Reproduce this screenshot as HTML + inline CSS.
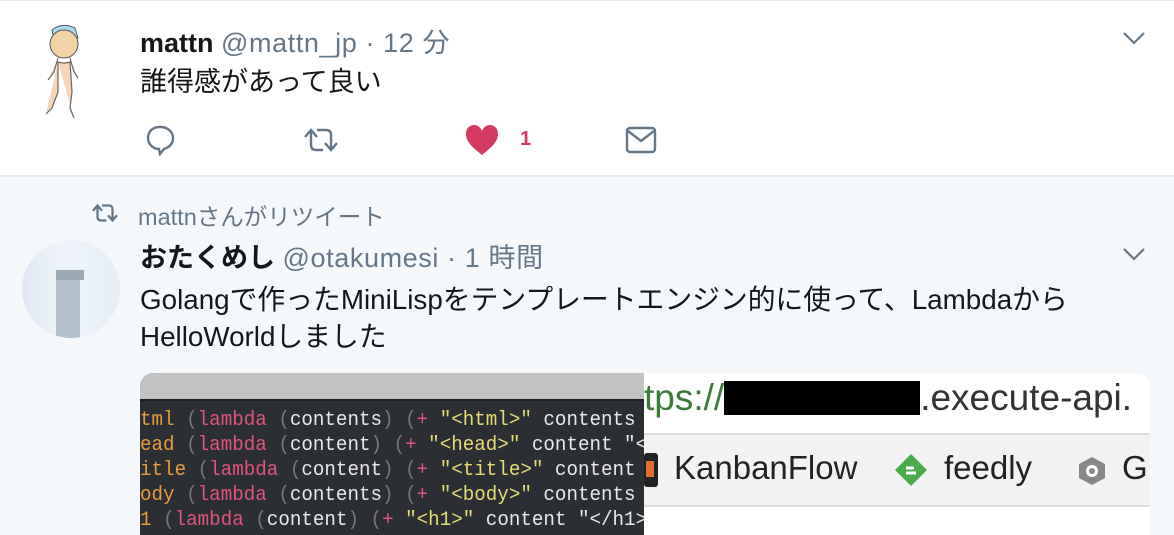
<!DOCTYPE html>
<html><head><meta charset="utf-8"><style>
*{margin:0;padding:0;box-sizing:border-box}
body{width:1174px;height:535px;overflow:hidden;background:#f5f8fa;font-family:"Liberation Sans","Noto Sans CJK JP",sans-serif;position:relative;color:#14171a}
.abs{position:absolute;white-space:nowrap}
.t1{background:#fff;position:absolute;left:0;top:0;width:1174px;height:177px;border-top:1px solid #e6ecf0;border-bottom:2px solid #e6ecf0}
.g{color:#657786}
.code{font-family:"Liberation Mono",monospace;font-size:20px;color:#e8e8e8;line-height:25px;transform:scaleX(0.96);transform-origin:left}
.p{color:#e0537b}.o{color:#e89a3c}.s{color:#e6db74}.d{color:#777}
</style></head><body>
<div class="t1"></div>
<svg class="abs" style="left:40px;top:22px" width="50" height="100" viewBox="0 0 50 100">
<path d="M12 8 Q22 0 35 6 L38 16 L14 18 Z" fill="#a8dcec" stroke="#556" stroke-width="1"/>
<ellipse cx="24" cy="22" rx="14" ry="14" fill="#f2d3a4" stroke="#555" stroke-width="1"/>
<path d="M18 36 L14 50 L8 58 M30 36 L34 50 L38 56 M18 40 Q24 42 30 40 L32 70 L30 86 L34 96 M18 40 L18 70 L12 86 L6 92" fill="#f6d6b8" stroke="#666" stroke-width="1.2"/>
</svg>
<div class="abs" style="left:140px;top:21px;font-size:27px"><b>mattn</b> <span class="g" style="letter-spacing:0.6px">@mattn_jp · 12 分</span></div>
<div class="abs" style="left:140px;top:60px;font-size:27px">誰得感があって良い</div>
<svg class="abs" style="left:1122px;top:30px" width="24" height="16" viewBox="0 0 24 16"><path d="M2 3 L12 13 L22 3" fill="none" stroke="#657786" stroke-width="2.2"/></svg>
<svg class="abs" style="left:145px;top:124px" width="32" height="32" viewBox="0 0 32 32"><path d="M15 3 C7 3 3 8 3 14 C3 20 8 25 14 25 L15 30 L19 25 C25 23 28 19 28 14 C28 8 23 3 15 3 Z" fill="none" stroke="#657786" stroke-width="2.4"/></svg>
<svg class="abs" style="left:303px;top:124px" width="36" height="32" viewBox="0 0 36 32"><path d="M8 7 V21 Q8 26 13 26 H20 M2 13 L8 6 L14 13 M14 6 H23 Q28 6 28 11 V25 M22 19 L28 26 L34 19" fill="none" stroke="#657786" stroke-width="2.4"/></svg>
<svg class="abs" style="left:465px;top:124px" width="34" height="32" viewBox="0 0 34 32"><path d="M17 31 C10 25 1 19 1 10 C1 4 5 1 9 1 C13 1 16 4 17 7 C18 4 21 1 25 1 C29 1 33 4 33 10 C33 19 24 25 17 31 Z" fill="#d23a62"/></svg>
<div class="abs" style="left:520px;top:128px;font-size:20px;font-weight:bold;color:#d23a62">1</div>
<svg class="abs" style="left:625px;top:126px" width="32" height="28" viewBox="0 0 32 28"><rect x="2" y="2" width="28" height="24" rx="3" fill="none" stroke="#657786" stroke-width="2.4"/><path d="M3 5 L16 15 L29 5" fill="none" stroke="#657786" stroke-width="2.4"/></svg>
<svg class="abs" style="left:90px;top:201px" width="30" height="24" viewBox="0 0 36 32"><path d="M8 7 V21 Q8 26 13 26 H20 M2 13 L8 6 L14 13 M14 6 H23 Q28 6 28 11 V25 M22 19 L28 26 L34 19" fill="none" stroke="#657786" stroke-width="3"/></svg>
<div class="abs g" style="left:138px;top:198px;font-size:23.5px">mattnさんがリツイート</div>
<div class="abs" style="left:22px;top:240px;width:98px;height:98px;border-radius:50%;background:linear-gradient(90deg,#dfe8f2,#eef4fa 40%,#e6eef6);overflow:hidden">
<div style="position:absolute;left:34px;top:30px;width:24px;height:80px;background:#b4c0cc"></div>
<div style="position:absolute;left:34px;top:30px;width:28px;height:10px;background:#9aa8b4"></div>
</div>
<div class="abs" style="left:140px;top:236px;font-size:27px"><b>おたくめし</b> <span class="g" style="letter-spacing:0.6px">@otakumesi · 1 時間</span></div>
<div class="abs" style="left:140px;top:278px;font-size:27.8px">Golangで作ったMiniLispをテンプレートエンジン的に使って、Lambdaから</div>
<div class="abs" style="left:140px;top:315px;font-size:27.8px">HelloWorldしました</div>
<svg class="abs" style="left:1122px;top:246px" width="24" height="16" viewBox="0 0 24 16"><path d="M2 3 L12 13 L22 3" fill="none" stroke="#657786" stroke-width="2.2"/></svg>
<div class="abs" style="left:140px;top:373px;width:1010px;height:162px;border-radius:14px 14px 0 0;overflow:hidden;background:#fff">
 <div style="position:absolute;left:0;top:0;width:504px;height:162px;background:#2b2f33">
  <div style="height:28px;background:#c2c2c2;border-bottom:2px solid #1c1e20"></div>
  <div class="code" style="padding-top:7px">
   <div><span class="o">tml</span> <span class="d">(</span><span class="p">lambda</span> <span class="d">(</span>contents<span class="d">)</span> <span class="d">(</span><span class="p">+</span> <span class="s">"&lt;html&gt;"</span> contents</div>
   <div><span class="o">ead</span> <span class="d">(</span><span class="p">lambda</span> <span class="d">(</span>content<span class="d">)</span> <span class="d">(</span><span class="p">+</span> <span class="s">"&lt;head&gt;"</span> content "&lt;</div>
   <div><span class="o">itle</span> <span class="d">(</span><span class="p">lambda</span> <span class="d">(</span>content<span class="d">)</span> <span class="d">(</span><span class="p">+</span> <span class="s">"&lt;title&gt;"</span> content</div>
   <div><span class="o">ody</span> <span class="d">(</span><span class="p">lambda</span> <span class="d">(</span>contents<span class="d">)</span> <span class="d">(</span><span class="p">+</span> <span class="s">"&lt;body&gt;"</span> contents</div>
   <div><span class="o">1</span> <span class="d">(</span><span class="p">lambda</span> <span class="d">(</span>content<span class="d">)</span> <span class="d">(</span><span class="p">+</span> <span class="s">"&lt;h1&gt;"</span> content "&lt;/h1&gt;</div>
  </div>
 </div>
 <div style="position:absolute;left:504px;top:0;width:506px;height:162px;background:#fff">
  <div class="abs" style="left:0px;top:4px;font-size:37px;color:#333"><span style="color:#3a7a3a">tps://</span><span style="display:inline-block;width:196px;height:34px;background:#000;vertical-align:-5px"></span>.execute-api.</div>
  <div style="position:absolute;left:0;top:60px;width:506px;height:74px;background:#f2f2f2;border-top:2px solid #ddd;border-bottom:2px solid #ddd"></div>
  <div class="abs" style="left:0;top:80px;width:14px;height:34px;background:#222;border-radius:3px"><div style="margin:8px 2px;width:8px;height:16px;background:#e07030"></div></div>
  <div class="abs" style="left:30px;top:76px;font-size:33px;color:#222">KanbanFlow</div>
  <svg class="abs" style="left:250px;top:80px" width="34" height="34" viewBox="0 0 34 34"><path d="M17 1 L33 17 L17 33 L1 17 Z" fill="#4aab4a"/><path d="M12 20 h10 M12 15 h8" stroke="#fff" stroke-width="3"/></svg>
  <div class="abs" style="left:300px;top:76px;font-size:33px;color:#222">feedly</div>
  <svg class="abs" style="left:432px;top:82px" width="32" height="32" viewBox="0 0 32 32"><path d="M16 2 L29 9 V23 L16 30 L3 23 V9 Z" fill="#888"/><circle cx="16" cy="16" r="6" fill="#fff"/><circle cx="16" cy="16" r="3" fill="#888"/></svg>
  <div class="abs" style="left:478px;top:76px;font-size:33px;color:#222">G</div>
 </div>
</div>
</body></html>
